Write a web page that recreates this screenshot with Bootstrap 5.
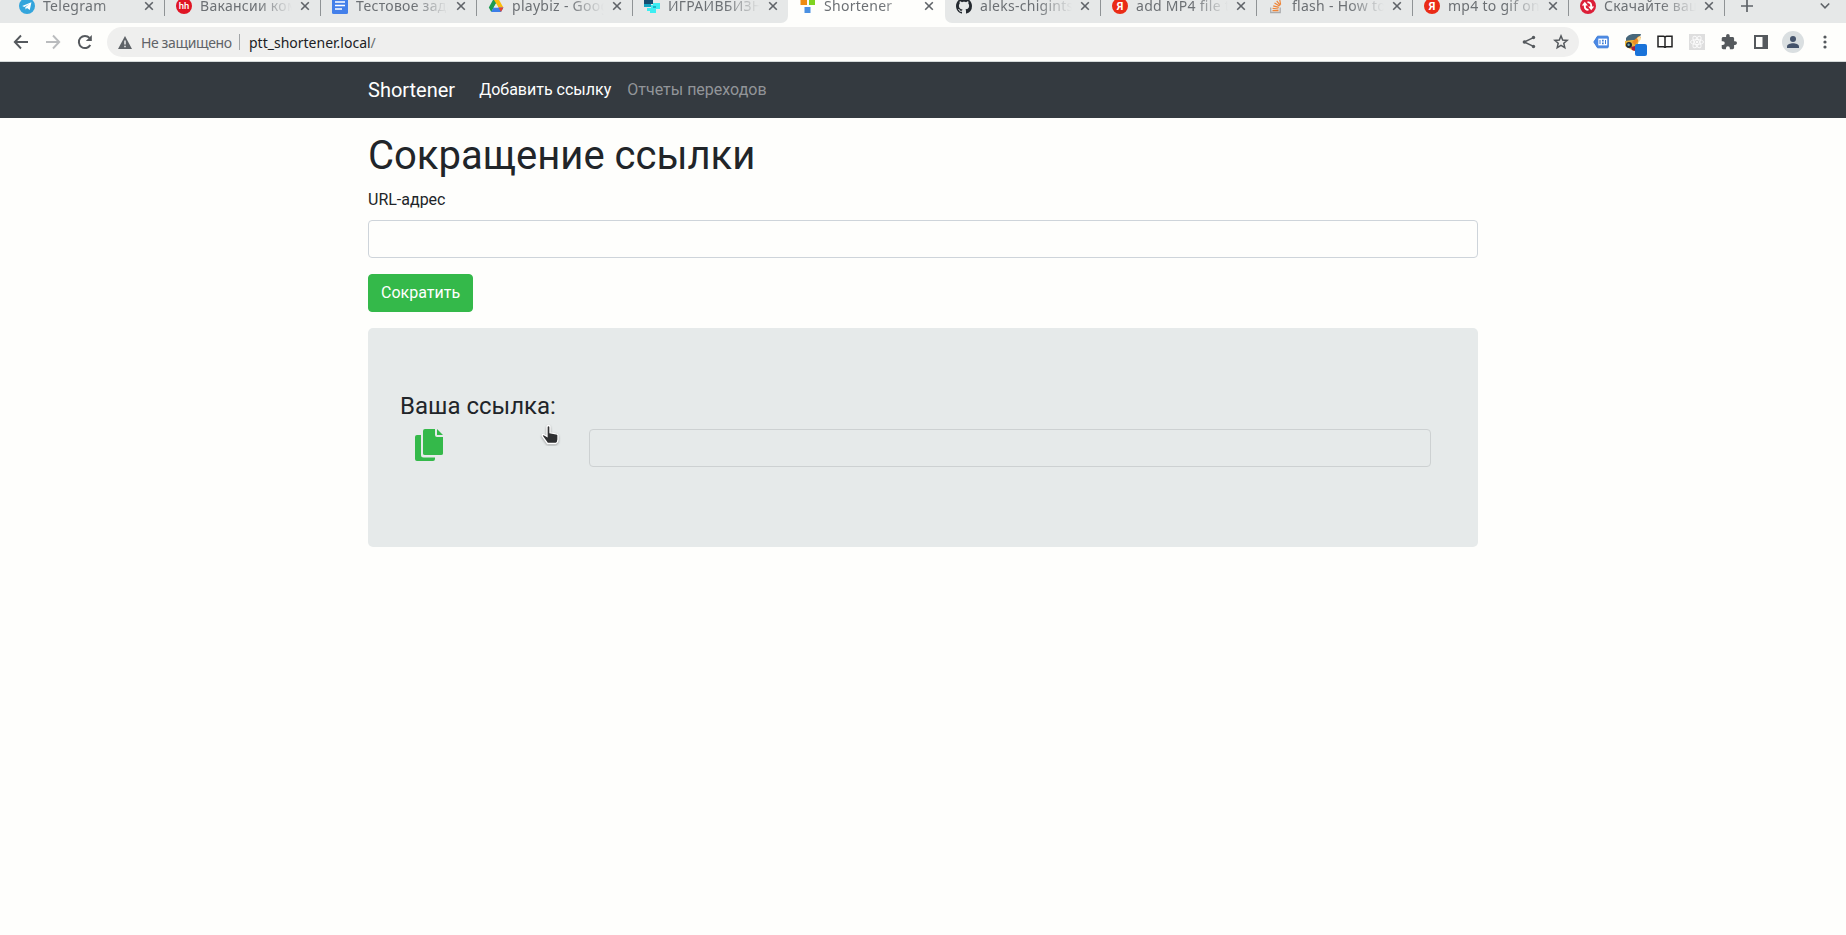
<!DOCTYPE html>
<html lang="ru">
<head>
<meta charset="utf-8">
<title>Shortener</title>
<link href="https://cdn.jsdelivr.net/npm/bootstrap@5.3.0/dist/css/bootstrap.min.css" rel="stylesheet">
<script src="https://cdn.jsdelivr.net/npm/bootstrap@5.3.0/dist/js/bootstrap.bundle.min.js"></script>
<style>
body{font-family:Roboto,sans-serif;background:#fefefc;color:#212529;min-height:935px;overflow:hidden}
svg{display:block;flex:none}
.chrome{font-family:"Noto Sans",sans-serif;font-size:14px;color:#5f6368;background:#fefefc}
.tabs{height:23px}
.tabset{background:#e6e8e8;overflow:hidden}
.tabset-l{border-bottom-right-radius:7px;padding-left:8px;width:788px}
.tabset-r{border-bottom-left-radius:7px;width:901px}
.tab{width:156px;flex:none;height:23px;padding:0 8px 11px 12px;position:relative}
.tab-current{width:157px;padding-right:9px}
.tab-title{width:92px;margin-left:8px;white-space:nowrap;overflow:hidden;line-height:20px;letter-spacing:.28px;color:#6c7074;-webkit-mask-image:linear-gradient(90deg,#000 62%,transparent 100%);mask-image:linear-gradient(90deg,#000 62%,transparent 100%)}
.tab-close{margin-left:auto;margin-right:2px}
.vline{width:1px;height:16px;background:#8f9395;flex:none;align-self:flex-start}
.toolbar{height:38px;padding:0 5px}
.cell{width:32px;height:30px;display:flex;align-items:center;justify-content:center;flex:none}
.omni{height:30px;border-radius:15px;background:#efefee;margin:0 6px}
.omni .vline{align-self:center;background:#a2a5a7}
.insecure{letter-spacing:-.38px;width:98px}
.url{letter-spacing:0;color:#202124;margin-left:9px}
.edge{height:1px;background:#d4d9d9}
.wrap{width:1140px;padding:0 15px;margin:0 auto}
.topnav{height:56px;background:#343a40}
.topnav .navbar-brand{font-size:20px;line-height:30px;color:#fff;margin-right:16px;padding:0}
.topnav .nav-link{padding:8px;color:#929599;font-size:16px}
.topnav .nav-link.active{color:#fff}
h1{font-size:40px;font-weight:400;line-height:48px;margin:14px 0 8px}
.form-control,.form-control:disabled{height:38px;border-radius:4px;border-color:#ced4da;background:transparent}
.form-label{line-height:24px;margin-bottom:8px;display:block}
.btn-short{background:#34b94a;color:#fff;border-radius:4px;height:38px;padding:6px 12px;border:1px solid #34b94a}
.result{background:#e6eaea;border-radius:5px;padding:64px 32px;height:219px;margin-top:16px}
.result h4{font-size:24px;font-weight:400;line-height:28.8px;margin-bottom:8px}
.result .form-control{width:842px;margin-right:15px;border-color:#cdd1d2}
.copy{margin-left:15px;width:174px}
.pointer{position:absolute;left:539px;top:424px}
</style>
</head>
<body>
<div class="chrome">
  <div class="tabs d-flex">
    <div class="tabset tabset-l d-flex">
      <div class="tab d-flex align-items-center"><svg style="margin-left:-1px" width="16" height="16" viewBox="0 0 16 16"><circle cx="8" cy="8" r="8" fill="#34a5dc"/><path d="M3.2 8 12.4 4.3 10.8 12 8 10.1 6.6 11.4 6.3 9.2 10.3 5.9 5.3 8.9z" fill="#fff"/></svg><span class="tab-title">Telegram</span><svg class="tab-close" width="10" height="10"><path d="M1.2 1.2l7.6 7.6m0-7.6l-7.6 7.6" stroke="#5f6368" stroke-width="1.6"/></svg></div>
      <div class="vline"></div>
      <div class="tab d-flex align-items-center" style="margin-left:-1px"><svg width="16" height="16" viewBox="0 0 16 16"><circle cx="8" cy="8" r="8" fill="#e01524"/><text x="8" y="11.3" text-anchor="middle" font-family="Roboto" font-size="9.5" font-weight="500" fill="#fff">hh</text></svg><span class="tab-title">Вакансии ком</span><svg class="tab-close" width="10" height="10"><path d="M1.2 1.2l7.6 7.6m0-7.6l-7.6 7.6" stroke="#5f6368" stroke-width="1.6"/></svg></div>
      <div class="vline"></div>
      <div class="tab d-flex align-items-center" style="margin-left:-1px"><svg width="16" height="16" viewBox="0 0 16 16"><rect width="16" height="16" rx="1.5" fill="#4480ea"/><path d="M3 4h10M3 7.5h10M3 11h7" stroke="#fff" stroke-width="1.6"/></svg><span class="tab-title">Тестовое зада</span><svg class="tab-close" width="10" height="10"><path d="M1.2 1.2l7.6 7.6m0-7.6l-7.6 7.6" stroke="#5f6368" stroke-width="1.6"/></svg></div>
      <div class="vline"></div>
      <div class="tab d-flex align-items-center" style="margin-left:-1px"><svg width="16" height="16" viewBox="0 0 16 16"><path d="M5.5 1h5L8 5.5 3.3 14 .8 9.5z" fill="#1c9b50"/><path d="M5.5 1h5l4.9 8.5h-5z" fill="#fbbc0a"/><path d="M5.5 9.5h9.9L13 14H3.2z" fill="#3c7ee8"/><path d="M10.5 9.5h4.9L13 14z" fill="#e8432f"/><path d="M8 5.4l2.4 4.1H5.6z" fill="#e6e8e8"/></svg><span class="tab-title">playbiz - Google</span><svg class="tab-close" width="10" height="10"><path d="M1.2 1.2l7.6 7.6m0-7.6l-7.6 7.6" stroke="#5f6368" stroke-width="1.6"/></svg></div>
      <div class="vline"></div>
      <div class="tab d-flex align-items-center" style="margin-left:-1px"><svg width="16" height="16" viewBox="0 0 16 16"><path d="M0 1h9v5H0z" fill="#164d70"/><path d="M0 6h7v3H0z" fill="#13a4c1"/><path d="M9 5h7v6h-4v4H6v-2H3v-3h4V7h2z" fill="#3ceef2"/><path d="M9 8h3v2H9z" fill="#1ab3c8"/></svg><span class="tab-title">ИГРАЙВБИЗНЕС</span><svg class="tab-close" width="10" height="10"><path d="M1.2 1.2l7.6 7.6m0-7.6l-7.6 7.6" stroke="#5f6368" stroke-width="1.6"/></svg></div>
    </div>
    <div class="tab tab-current d-flex align-items-center"><svg width="16" height="16" viewBox="0 0 16 16"><path d="M.5 0h6.500v7H.5z" fill="#ee8c13"/><path d="M9 0h6v7H9z" fill="#7ed321"/><path d="M4.500 9h6v6h-6z" fill="#4a90e2"/></svg><span class="tab-title">Shortener</span><svg class="tab-close" width="10" height="10"><path d="M1.2 1.2l7.6 7.6m0-7.6l-7.6 7.6" stroke="#5f6368" stroke-width="1.6"/></svg></div>
    <div class="tabset tabset-r d-flex">
      <div class="tab d-flex align-items-center" style="padding-left:11px;padding-right:9px"><svg width="16" height="16" viewBox="0 0 16 16"><path fill="#24292f" d="M8 0C3.580 0 0 3.580 0 8c0 3.540 2.290 6.530 5.470 7.590.4.070.550-.170.550-.380 0-.190-.010-.820-.010-1.490-2.010.370-2.530-.490-2.690-.940-.090-.230-.480-.940-.820-1.130-.280-.150-.680-.520-.010-.530.630-.010 1.080.580 1.230.820.720 1.210 1.870.870 2.330.660.070-.520.280-.870.510-1.070-1.780-.200-3.640-.890-3.640-3.950 0-.870.310-1.590.820-2.150-.080-.200-.360-1.020.080-2.120 0 0 .670-.210 2.200.820.640-.180 1.320-.270 2-.270s1.360.090 2 .270c1.530-1.040 2.200-.820 2.200-.820.440 1.100.160 1.920.080 2.120.510.560.820 1.270.820 2.150 0 3.070-1.870 3.750-3.650 3.950.290.250.540.730.540 1.480 0 1.070-.010 1.930-.010 2.200 0 .210.150.460.550.380A8.010 8.010 0 0 0 16 8c0-4.420-3.580-8-8-8"/></svg><span class="tab-title">aleks-chigintsev</span><svg class="tab-close" width="10" height="10"><path d="M1.200 1.200l7.600 7.600m0-7.600l-7.600 7.600" stroke="#5f6368" stroke-width="1.6"/></svg></div>
      <div class="vline" style="margin-left:-1px"></div>
      <div class="tab d-flex align-items-center" style="margin-left:-1px"><svg width="16" height="16" viewBox="0 0 16 16"><circle cx="8" cy="8" r="8" fill="#ea2b16"/><text x="8" y="12" text-anchor="middle" font-family="Roboto" font-size="11" font-weight="700" fill="#fff">Я</text></svg><span class="tab-title">add MP4 file to</span><svg class="tab-close" width="10" height="10"><path d="M1.200 1.200l7.600 7.600m0-7.600l-7.600 7.600" stroke="#5f6368" stroke-width="1.6"/></svg></div>
      <div class="vline"></div>
      <div class="tab d-flex align-items-center" style="margin-left:-1px"><svg width="16" height="16" viewBox="0 0 16 16"><path d="M2.700 9.500v5h9.500v-5" fill="none" stroke="#aaabad" stroke-width="1.300"/><path d="M4.500 12.700h6M4.600 10.400l5.900.6M5.200 7.800l5.600 1.600M6.500 5l5 3M8.700 2.800l3.600 4.600M11.600.8l1 5.800" stroke="#ee8437" stroke-width="1.200"/></svg><span class="tab-title">flash - How to u</span><svg class="tab-close" width="10" height="10"><path d="M1.200 1.200l7.600 7.600m0-7.600l-7.600 7.600" stroke="#5f6368" stroke-width="1.6"/></svg></div>
      <div class="vline"></div>
      <div class="tab d-flex align-items-center" style="margin-left:-1px"><svg width="16" height="16" viewBox="0 0 16 16"><circle cx="8" cy="8" r="8" fill="#ea2b16"/><text x="8" y="12" text-anchor="middle" font-family="Roboto" font-size="11" font-weight="700" fill="#fff">Я</text></svg><span class="tab-title">mp4 to gif onlin</span><svg class="tab-close" width="10" height="10"><path d="M1.200 1.200l7.600 7.600m0-7.600l-7.600 7.600" stroke="#5f6368" stroke-width="1.6"/></svg></div>
      <div class="vline"></div>
      <div class="tab d-flex align-items-center" style="margin-left:-1px"><svg width="16" height="16" viewBox="0 0 16 16"><circle cx="8" cy="8" r="8" fill="#dc1f38"/><path d="M4.800 6v2.500q0 3 3.700 3.400M11.200 10V7.500q0-3-3.700-3.400" fill="none" stroke="#fff" stroke-width="1.900"/><path d="M1.800 7.500L4.800 3.800 7.800 7.500zM8.200 8.500h6l-3 3.700z" fill="#fff"/></svg><span class="tab-title">Скачайте ваш</span><svg class="tab-close" width="10" height="10"><path d="M1.200 1.200l7.600 7.600m0-7.600l-7.600 7.600" stroke="#5f6368" stroke-width="1.6"/></svg></div>
      <div class="vline"></div>
      <svg style="margin:0 0 0 16px" width="12" height="12"><path d="M6 0v12M0 6h12" stroke="#5f6368" stroke-width="1.700"/></svg>
      <svg class="ms-auto" style="margin-right:16px" width="10" height="12"><path d="M.8 3.500L5 7.800l4.200-4.300" fill="none" stroke="#5f6368" stroke-width="1.600"/></svg>
    </div>
  </div>
  <div class="toolbar d-flex align-items-center">
    <div class="cell"><svg width="16" height="16" viewBox="0 0 16 16"><path d="M15 8H2M8 1.500L1.800 8 8 14.500" fill="none" stroke="#55595d" stroke-width="1.900"/></svg></div>
    <div class="cell"><svg width="16" height="16" viewBox="0 0 16 16"><path d="M1 8h13M8 1.500L14.200 8 8 14.500" fill="none" stroke="#babcbe" stroke-width="1.900"/></svg></div>
    <div class="cell"><svg width="16" height="16" viewBox="0 0 16 16"><path d="M13.300 11A6.100 6.100 0 1 1 12.500 3.900" fill="none" stroke="#55595d" stroke-width="2"/><path d="M14.800 1v6H8.800z" fill="#55595d"/></svg></div>
    <div class="omni d-flex align-items-center flex-grow-1">
      <svg style="margin:0 9px 0 11px" width="14" height="13" viewBox="0 0 14 13"><path d="M7 0l7 13H0z" fill="#5f6368"/><path d="M7 4.500v4M7 9.700v1.600" stroke="#efefee" stroke-width="1.500"/></svg>
      <span class="insecure text-nowrap">Не защищено</span>
      <div class="vline"></div>
      <span class="url">ptt_shortener.local<span style="color:#6b6f73">/</span></span>
      <div class="cell ms-auto"><svg width="14" height="14" viewBox="0 0 14 14"><path d="M12 2.300L2.200 7 12 11.700" fill="none" stroke="#55595d" stroke-width="1.400"/><circle cx="11.500" cy="2.500" r="1.700" fill="#55595d"/><circle cx="2.400" cy="7" r="1.700" fill="#55595d"/><circle cx="11.500" cy="11.500" r="1.700" fill="#55595d"/></svg></div>
      <div class="cell me-0"><svg width="16" height="16" viewBox="0 0 16 16"><path d="M8 1.900l1.700 4.100 4.500.4-3.400 2.900 1 4.400L8 11.400l-3.800 2.300 1-4.400L1.800 6.400 6.300 6z" fill="none" stroke="#55595d" stroke-width="1.500"/></svg></div>
      <div style="width:2px"></div>
    </div>
    <div class="cell"><svg width="16" height="14" viewBox="0 0 16 14"><path d="M4.500 1.200h9.800q1 0 1 1v9.600q0 1-1 1H4.500L.8 7z" fill="#4a88e4" stroke="#3f7fd8"/><path d="M5.300 3.600h9v6.800h-9z" fill="#fff"/><path d="M7 5v4M12.500 5v4" stroke="#3f7fd8" stroke-width="1"/><path d="M9 4.800h1.700v1.700H9zM9 7.600h1.700v1.700H9z" fill="#3f7fd8"/></svg></div>
    <div class="cell"><svg style="margin:6px -6px 0 0" width="22" height="23" viewBox="0 0 22 23"><path d="M1 4Q4-.5 10 0l6 0-2 6-7 2-6 0z" fill="#47677a"/><path d="M0 7l7-1 7 0-2 7-3 4-4-2-5-3z" fill="#e7b43c"/><path d="M7 8l7-6 2 1.500L10 11z" fill="#f08b22"/><path d="M12 4l3-2 1 3-2 3z" fill="#fae1a5"/><circle cx="4" cy="11" r="3" fill="#1c2835"/><circle cx="3.600" cy="10.700" r="1.200" fill="#6aa7b8"/><path d="M6 13l4-1v5l-3-1z" fill="#a41e42"/><rect x="10" y="10" width="12" height="12" rx="2" fill="#1a73d9"/></svg></div>
    <div class="cell"><svg width="16" height="14" viewBox="0 0 16 14"><path d="M1 1.300h5.500Q8 1.300 8 2.500q0-1.200 1.500-1.200H15v10.500H9.500Q8 11.800 8 13q0-1.200-1.500-1.200H1zM8 2.500V13" fill="none" stroke="#222" stroke-width="1.500"/></svg></div>
    <div class="cell"><svg width="16" height="16" viewBox="0 0 16 16"><rect width="16" height="16" fill="#dedede"/><g fill="none" stroke="#fafafa"><ellipse cx="8" cy="8" rx="6.500" ry="2.500"/><ellipse cx="8" cy="8" rx="6.500" ry="2.500" transform="rotate(60 8 8)"/><ellipse cx="8" cy="8" rx="6.500" ry="2.500" transform="rotate(120 8 8)"/></g><circle cx="8" cy="8" r="1.200" fill="#fafafa"/></svg></div>
    <div class="cell"><svg style="margin-right:1px" width="16" height="16" viewBox="1 1 22 22"><path fill="#55595d" d="M20.500 11H19V7c0-1.100-.9-2-2-2h-4V3.500a2.500 2.500 0 0 0-5 0V5H4c-1.100 0-2 .9-2 2v3.800h1.500a2.700 2.700 0 0 1 0 5.400H2V20c0 1.100.9 2 2 2h3.800v-1.500a2.700 2.700 0 0 1 5.400 0V22H17c1.100 0 2-.9 2-2v-4h1.500a2.500 2.500 0 0 0 0-5z"/></svg></div>
    <div class="cell"><svg width="14" height="14"><rect width="14" height="14" fill="#55595d"/><rect x="2" y="2" width="6.500" height="10" fill="#fefefc"/></svg></div>
    <div class="cell"><svg width="22" height="22" viewBox="0 0 22 22"><circle cx="11" cy="11" r="11" fill="#dadfe1"/><circle cx="11" cy="8" r="3" fill="#45546c"/><path d="M5 17v-1.500C5 13.300 8.500 12.300 11 12.300s6 1 6 3.200V17z" fill="#45546c"/></svg></div>
    <div class="cell"><svg width="4" height="14" fill="#55595d"><circle cx="2" cy="2" r="1.600"/><circle cx="2" cy="7" r="1.600"/><circle cx="2" cy="12" r="1.600"/></svg></div>
  </div>
  <div class="edge"></div>
</div>
<nav class="topnav">
  <div class="wrap d-flex align-items-center h-100">
    <a class="navbar-brand" href="#">Shortener</a>
    <div class="nav flex-nowrap">
      <a class="nav-link active" href="#">Добавить ссылку</a>
      <a class="nav-link" href="#">Отчеты переходов</a>
    </div>
  </div>
</nav>
<main class="wrap">
  <h1>Сокращение ссылки</h1>
  <label class="form-label" for="url">URL-адрес</label>
  <input class="form-control mb-3" id="url" type="text">
  <button class="btn btn-short d-block" type="button">Сократить</button>
  <section class="result">
    <h4>Ваша ссылка:</h4>
    <div class="d-flex">
      <div class="copy"><svg width="28" height="32" viewBox="0 0 28 32"><path d="M0 8q0-2 2-2h4v20q0 2.500 2.500 2.500H20V30q0 2-2 2H2q-2 0-2-2z" fill="#34b94a"/><path d="M8 2q0-2 2-2h10v6q0 2 2 2h6v16.500q0 1.500-2 1.500H10q-2 0-2-1.500z" fill="#34b94a"/><path d="M22 0l6 6H22z" fill="#34b94a"/></svg></div>
      <input class="form-control ms-auto" type="text" disabled aria-label="Ваша ссылка">
    </div>
  </section>
</main>
<svg class="pointer" width="22" height="22" viewBox="0 0 22 22"><path d="M8.500 19.500h8.200q2.300-1 2.300-4v-4.200q0-1.300-2-1.500l-6-1V3q0-1.500-1.500-1.500T8 3v9.500L4.500 10.500Q2.500 10.800 3.500 12.500z" fill="#2e2f31" stroke="#fff" stroke-width="1.300" style="filter:drop-shadow(0 1px 1px #0005)"/></svg>
</body>
</html>
